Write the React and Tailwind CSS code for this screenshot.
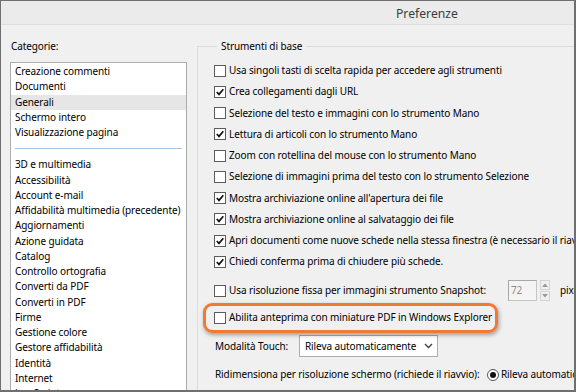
import React from "react";

const categoriesTop = [
  "Creazione commenti",
  "Documenti",
  "Generali",
  "Schermo intero",
  "Visualizzazione pagina",
];

const categoriesBottom = [
  "3D e multimedia",
  "Accessibilità",
  "Account e-mail",
  "Affidabilità multimedia (precedente)",
  "Aggiornamenti",
  "Azione guidata",
  "Catalog",
  "Controllo ortografia",
  "Converti da PDF",
  "Converti in PDF",
  "Firme",
  "Gestione colore",
  "Gestore affidabilità",
  "Identità",
  "Internet",
  "JavaScript",
];

const options = [
  { label: "Usa singoli tasti di scelta rapida per accedere agli strumenti", checked: false },
  { label: "Crea collegamenti dagli URL", checked: true },
  { label: "Selezione del testo e immagini con lo strumento Mano", checked: false },
  { label: "Lettura di articoli con lo strumento Mano", checked: true },
  { label: "Zoom con rotellina del mouse con lo strumento Mano", checked: false },
  { label: "Selezione di immagini prima del testo con lo strumento Selezione", checked: false },
  { label: "Mostra archiviazione online all'apertura dei file", checked: true },
  { label: "Mostra archiviazione online al salvataggio dei file", checked: true },
  { label: "Apri documenti come nuove schede nella stessa finestra (è necessario il riavvio)", checked: true },
  { label: "Chiedi conferma prima di chiudere più schede.", checked: true },
];

function CheckBox({ checked }) {
  return (
    <span className="w-[12px] h-[12px] shrink-0 border border-[#5c5c5c] bg-white flex items-center justify-center">
      {checked && (
        <svg width="10" height="10" viewBox="0 0 10 10">
          <path d="M1.8 5 L4 7.4 L8.3 2.3" fill="none" stroke="#111" strokeWidth="1.7" />
        </svg>
      )}
    </span>
  );
}

function ListItem({ text, selected }) {
  return (
    <div
      className={`h-[15.25px] leading-[15.25px] pl-[4px] whitespace-nowrap ${
        selected ? "bg-[#e6e6e6]" : ""
      }`}
    >
      {text}
    </div>
  );
}

export default function App() {
  return (
    <div
      className="w-[576px] h-[392px] overflow-hidden bg-[#f0f0f0] border-l border-t border-r-2 border-b-2 border-[#6f6f6f] text-[10px] tracking-[-0.1px] text-black"
      style={{ fontFamily: '"Noto Sans", "Open Sans", sans-serif' }}
    >
      {/* title bar */}
      <div className="h-[24px] bg-[#ebebeb] border-b border-[#dedede] pl-[395px] text-[12.2px] tracking-normal leading-[25px] text-[#3c3c3c]">
        Preferenze
      </div>

      <div className="flex">
        {/* categories */}
        <div className="w-[196px] shrink-0 pl-[9px] pt-[14px]">
          <div className="h-[15px] leading-[15px] pl-[1px]">Categorie:</div>
          <div className="mt-[8px] w-[177px] h-[360px] overflow-hidden border border-[#acacac] bg-white pt-[1px]">
            {categoriesTop.map((c) => (
              <ListItem key={c} text={c} selected={c === "Generali"} />
            ))}
            <div className="py-[8px] px-[4px]">
              <div className="h-px bg-[#a3c5e8]" />
            </div>
            {categoriesBottom.map((c) => (
              <ListItem key={c} text={c} />
            ))}
          </div>
        </div>

        {/* settings */}
        <div className="flex-1 pt-[14px]">
          <fieldset className="w-[420px] h-[400px] border border-[#dcdcdc] pl-[16px] pt-[6px]">
            <legend className="ml-[3px] px-[4px] h-[15px] leading-[15px]">Strumenti di base</legend>

            {options.map((o) => (
              <div key={o.label} className="h-[21.25px] flex items-center gap-[3px] whitespace-nowrap">
                <CheckBox checked={o.checked} />
                <span>{o.label}</span>
              </div>
            ))}

            <div className="mt-[7.5px] h-[21px] flex items-center gap-[3px] whitespace-nowrap">
              <CheckBox checked={false} />
              <span className="w-[276px] shrink-0">Usa risoluzione fissa per immagini strumento Snapshot:</span>
              <span className="w-[29px] h-[21px] shrink-0 border border-[#c5c5c5] border-t-[#a8a8a8] border-l-[#a8a8a8] bg-[#f4f4f4] pl-[2px] leading-[19px] text-[#8c8c8c]">
                72
              </span>
              <span className="w-[10px] h-[21px] shrink-0 flex flex-col justify-between">
                <span className="h-[10px] border border-[#d4d4d4] flex items-center justify-center">
                  <svg width="6" height="4" viewBox="0 0 6 4">
                    <path d="M0 4 L3 0.5 L6 4 Z" fill="#9a9a9a" />
                  </svg>
                </span>
                <span className="h-[10px] border border-[#d4d4d4] flex items-center justify-center">
                  <svg width="6" height="4" viewBox="0 0 6 4">
                    <path d="M0 0 L3 3.5 L6 0 Z" fill="#9a9a9a" />
                  </svg>
                </span>
              </span>
              <span className="ml-[7px]">pixel</span>
            </div>

            <div className="relative mt-[6px] h-[21px] flex items-center gap-[3px] whitespace-nowrap">
              <CheckBox checked={false} />
              <span>Abilita anteprima con miniature PDF in Windows Explorer</span>
              <span className="absolute left-[-11px] top-[-4px] w-[295px] h-[30px] rounded-[9px] border-[3px] border-[#ef7a30] shadow-[1px_2px_4px_rgba(0,0,0,0.35)]" />
            </div>

            <div className="mt-[7px] h-[22px] flex items-center whitespace-nowrap">
              <span className="w-[85px] shrink-0 pl-[1px]">Modalità Touch:</span>
              <span className="w-[139px] h-[22px] shrink-0 border border-[#acacac] bg-white flex items-center justify-between pl-[5px] pr-[4px]">
                <span>Rileva automaticamente</span>
                <svg width="9" height="6" viewBox="0 0 9 6">
                  <path d="M1 1 L4.5 4.5 L8 1" fill="none" stroke="#444" strokeWidth="1.4" />
                </svg>
              </span>
            </div>

            <div className="mt-[7px] h-[21px] flex items-center whitespace-nowrap">
              <span className="w-[273px] shrink-0 pl-[1px]">Ridimensiona per risoluzione schermo (richiede il riavvio):</span>
              <span className="w-[12px] h-[12px] shrink-0 rounded-full border border-[#555] bg-white flex items-center justify-center">
                <span className="w-[6px] h-[6px] rounded-full bg-[#111]" />
              </span>
              <span className="ml-[2px]">Rileva automaticamente</span>
            </div>
          </fieldset>
        </div>
      </div>
    </div>
  );
}
